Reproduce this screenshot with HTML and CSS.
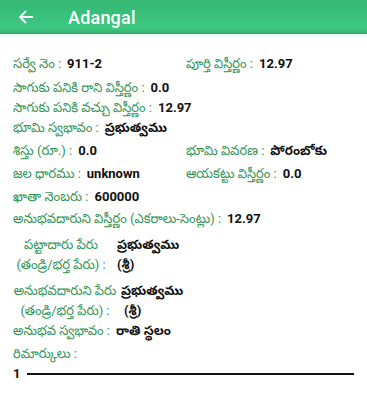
FILE: index.html
```html
<!DOCTYPE html>
<html>
<head>
<meta charset="utf-8">
<link rel="stylesheet" href="styles.css">
</head>
<body>
<header class="bar">
  <svg class="back" width="16" height="16" viewBox="0 0 16 16"><path d="M15 8H2M8 2L2 8l6 6" fill="none" stroke="#fff" stroke-width="1.8"/></svg>
  <span class="title">Adangal</span>
</header>
<div class="band"></div>
<main class="content">
  <div class="row r1"><div class="cell"><span class="lb">సర్వే నెం :</span><b>911-2</b></div><div class="cell"><span class="lb">పూర్తి విస్తీర్ణం :</span><b>12.97</b></div></div>
  <div class="row r2"><span class="lb">సాగుకు పనికి రాని విస్తీర్ణం :</span><b>0.0</b></div>
  <div class="row r3"><span class="lb">సాగుకు పనికి వచ్చు విస్తీర్ణం :</span><b>12.97</b></div>
  <div class="row r3"><span class="lb">భూమి స్వభావం :</span><b>ప్రభుత్వము</b></div>
  <div class="row r5"><div class="cell"><span class="lb">శిస్తు (రూ.) :</span><b>0.0</b></div><div class="cell"><span class="lb">భూమి వివరణ :</span><b>పోరంబోకు</b></div></div>
  <div class="row r5"><div class="cell"><span class="lb">జల ధారము :</span><b>unknown</b></div><div class="cell"><span class="lb">ఆయకట్టు విస్తీర్ణం :</span><b>0.0</b></div></div>
  <div class="row r5"><span class="lb">ఖాతా నెంబరు :</span><b>600000</b></div>
  <div class="row r8"><span class="lb">అనుభవదారుని విస్తీర్ణం (ఎకరాలు-సెంట్లు) :</span><b>12.97</b></div>
  <div class="pair p1">
    <div class="pl">పట్టాదారు పేరు</div><div class="pv"><b>ప్రభుత్వము</b></div>
    <div class="pl">(తండ్రి/భర్త పేరు) :</div><div class="pv"><b>(శ్రీ)</b></div>
  </div>
  <div class="pair p2">
    <div class="pl">అనుభవదారుని పేరు</div><div class="pv"><b>ప్రభుత్వము</b></div>
    <div class="pl">(తండ్రి/భర్త పేరు) :</div><div class="pv pv2"><b>(శ్రీ)</b></div>
  </div>
  <div class="row r13"><span class="lb">అనుభవ స్వభావం :</span><b>రాతి స్థలం</b></div>
  <div class="row r14"><span class="lb">రిమార్కులు :</span></div>
  <div class="rule"><b>1</b><span class="line"></span></div>
</main>
</body>
</html>
```
FILE: styles.css
```css
* { box-sizing: border-box; }
html, body { margin: 0; padding: 0; background: #fff; }
body { width: 367px; height: 400px; overflow: hidden; font-family: Roboto, "Noto Sans", "Noto Sans Telugu", sans-serif; font-size: 13px; color: #111; }
.bar { height: 34px; background: linear-gradient(180deg, #35b873 0%, #3dc882 85%, #34a86b 100%); display: flex; align-items: center; padding-left: 18px; }
.back { display: block; }
.title { color: #fff; font-size: 18px; font-weight: 500; margin-left: 34px; letter-spacing: 0.2px; }
.band { height: 3px; background: #eef6f2; }
.content { padding: 0 13px; }
.row { display: flex; align-items: center; height: 20px; line-height: 20px; white-space: nowrap; }
.row b { margin-left: 6px; }
.cell { width: 173px; flex: none; display: flex; align-items: center; }
.lb { color: #2f9455; }
b { font-weight: 700; color: #111; }
.r1 { margin-top: 17px; }
.r2 { margin-top: 4px; }
.r3 { margin-top: 0; }
.r5 { margin-top: 3px; }
.r8 { margin-top: 2px; }
.pair { display: grid; grid-template-columns: 96px auto; column-gap: 8px; line-height: 20px; white-space: nowrap; }
.p1 { margin-top: 6px; }
.p2 { margin-top: 6px; grid-template-columns: 104px auto; column-gap: 4px; }
.pv2 { padding-left: 3px; }
.pl { color: #2f9455; text-align: center; }
.r13 { margin-top: 0; }
.r14 { margin-top: 3px; }
.rule { display: flex; align-items: center; gap: 7px; height: 19px; }
.rule b { margin: 0; }
.line { height: 2px; background: #111; width: 332px; }
```
